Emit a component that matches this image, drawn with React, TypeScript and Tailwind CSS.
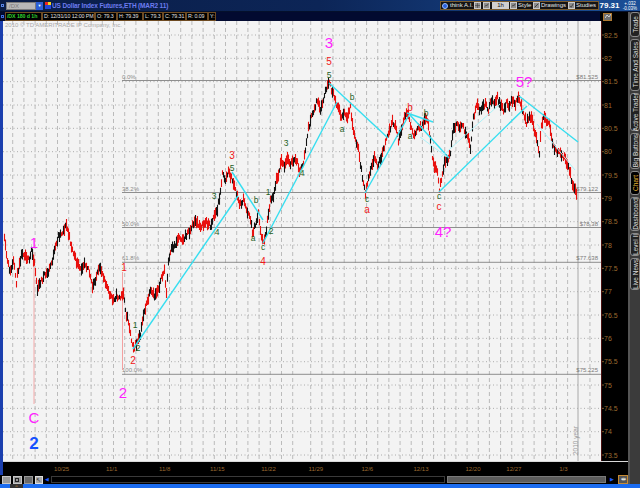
import React from "react";

const yOf = (p: number) => 35 + (82.5 - p) * 46.67;
const LEVELS = Array.from({ length: 19 }, (_, i) => 82.5 - i * 0.5);

// rough path of the hourly closes, in page pixels
const PATH: [number, number][] = [
  [4, 240], [7, 262], [10, 272], [13, 262], [16, 282], [19, 262], [22, 252], [26, 256], [29, 262], [31, 250],
  [34, 262], [37, 290], [40, 282], [44, 276], [48, 272], [52, 260], [55, 248], [58, 236], [62, 232], [66, 225],
  [69, 238], [72, 250], [76, 262], [80, 270], [84, 262], [88, 268], [92, 288], [96, 276], [100, 268], [104, 278],
  [108, 292], [112, 300], [116, 296], [120, 298], [123, 292], [125, 312], [128, 320], [131, 340], [134, 348],
  [137, 342], [140, 336], [143, 314], [146, 305], [150, 292], [154, 296], [158, 288], [162, 276], [164, 270],
  [166, 294], [168, 262], [171, 250], [175, 244], [179, 236], [183, 240], [187, 233], [190, 230], [194, 221],
  [198, 225], [202, 226], [206, 222], [210, 226], [213, 217], [217, 210], [220, 190], [222, 174], [225, 180],
  [228, 172], [231, 178], [234, 186], [237, 198], [240, 205], [243, 200], [246, 210], [249, 214], [252, 232],
  [255, 226], [258, 212], [261, 238], [263, 242], [266, 230], [268, 212], [270, 200], [273, 195], [276, 180],
  [279, 170], [281, 160], [284, 168], [287, 158], [290, 163], [293, 162], [296, 160], [299, 170], [302, 168],
  [305, 150], [308, 128], [311, 118], [314, 108], [317, 100], [320, 112], [323, 100], [326, 88], [329, 84],
  [332, 92], [335, 100], [338, 108], [341, 118], [344, 113], [347, 120], [350, 106], [352, 125], [355, 140],
  [358, 150], [361, 170], [363, 185], [365, 192], [368, 178], [371, 165], [374, 157], [377, 165], [380, 160],
  [383, 150], [386, 140], [389, 130], [392, 122], [395, 125], [398, 140], [401, 130], [404, 118], [407, 112],
  [410, 124], [413, 135], [416, 130], [419, 128], [422, 125], [425, 118], [428, 125], [431, 150], [434, 168],
  [437, 172], [439, 190], [441, 178], [444, 162], [447, 160], [450, 153], [453, 127], [456, 125], [459, 128],
  [462, 123], [465, 133], [468, 140], [470, 150], [473, 118], [476, 105], [479, 110], [482, 107], [485, 104],
  [488, 110], [491, 100], [494, 105], [497, 98], [500, 106], [503, 110], [506, 103], [509, 105], [512, 100],
  [515, 104], [518, 98], [520, 102], [523, 115], [526, 122], [529, 118], [532, 120], [535, 135], [537, 145],
  [539, 152], [541, 125], [543, 118], [546, 120], [549, 124], [552, 142], [555, 150], [558, 153], [561, 154],
  [564, 158], [567, 163], [570, 175], [572, 183], [574, 188], [576, 195],
];

function at(x: number) {
  for (let i = 1; i < PATH.length; i++) {
    const [x1, y1] = PATH[i];
    if (x <= x1) {
      const [x0, y0] = PATH[i - 1];
      return y0 + ((y1 - y0) * (x - x0)) / (x1 - x0);
    }
  }
  return PATH[PATH.length - 1][1];
}

let seed = 11;
const rnd = () => {
  seed = (seed * 16807) % 2147483647;
  return seed / 2147483647;
};

let redBars = "";
let blackBars = "";
for (let x = 4; x <= 576; x++) {
  const y = at(x) + (rnd() - 0.5) * 5;
  const h = 2 + rnd() * 4;
  const up = at(x + 2) - at(x - 2) < 0;
  const seg = `M${x + 0.5} ${(y - h).toFixed(1)}V${(y + h).toFixed(1)}`;
  if (up ? rnd() < 0.6 : rnd() < 0.15) blackBars += seg;
  else redBars += seg;
}

const dayLines: number[] = [];
for (let x = 12.7; x < 296; x += 11.2) dayLines.push(x);
for (let x = 310.7; x < 600; x += 11.17) if (Math.abs(x - 578) > 3) dayLines.push(x);

const FIBS = [
  { p: "0.0%", v: "$81.525", y: 80.5 },
  { p: "38.2%", v: "$79.122", y: 192.5 },
  { p: "50.0%", v: "$78.38", y: 227.5 },
  { p: "61.8%", v: "$77.638", y: 262.3 },
  { p: "100.0%", v: "$75.225", y: 374.3 },
];

const CYAN: [number, number, number, number, boolean?][] = [
  [133, 349, 238, 196],
  [232, 172, 263, 220],
  [263, 243, 337, 102],
  [329, 83, 388, 138],
  [365, 193, 409, 115],
  [407, 113, 433, 122],
  [410, 115, 449, 158],
  [439, 192, 527, 106],
  [519, 96, 578, 142],
  [441, 157, 500, 104, true],
  [537, 124, 575, 170, true],
  [420, 137, 447, 157, true],
];

type Lbl = [string, number, number];
const PINK: Lbl[] = [
  ["1", 34, 248], ["C", 34, 423], ["2", 123, 398], ["3", 329, 48], ["4?", 443, 237], ["5?", 524, 87],
];
const RED: Lbl[] = [
  ["1", 124, 271], ["2", 133, 364], ["3", 232, 159], ["4", 263, 265], ["5", 329, 65],
  ["a", 367, 213], ["b", 410, 111], ["c", 439, 210],
];
const GREEN: Lbl[] = [
  ["1", 135, 328], ["2", 138, 351], ["3", 214, 199], ["5", 232, 171], ["4", 217, 235], ["b", 256, 203],
  ["a", 253, 241], ["c", 263, 250], ["1", 268, 195], ["2", 271, 234], ["3", 286, 146], ["4", 302, 176],
  ["5", 329, 78], ["b", 352, 100], ["a", 342, 132], ["c", 367, 202], ["a", 410, 139], ["b", 426, 116],
  ["c", 439, 199],
];

const DATES: [string, number][] = [
  ["10/25", 34], ["11/1", 90], ["11/8", 147], ["11/15", 202], ["11/22", 257], ["11/29", 308],
  ["12/6", 365], ["12/13", 421], ["12/20", 477], ["12/27", 521], ["1/3", 578],
];

const TABS: [string, number, boolean?][] = [
  ["Trade", 25], ["Time And Sales", 52], ["Active Trader", 38], ["Big Buttons", 36],
  ["Chart", 24, true], ["Dashboard", 34], ["Level II", 23], ["Live News", 32],
];

const INFO: [string, number, boolean?][] = [
  ["/DX 180 d 1h", 37, true], ["D: 12/31/10 12:00 PM", 53], ["O: 79.3", 22], ["H: 79.39", 26],
  ["L: 79.3", 20], ["C: 79.31", 23], ["R: 0.09", 22], ["Y:", 8],
];

function MiniIcon({ kind }: { kind: "chart" | "pen" | "check" | "grid" }) {
  return (
    <svg width="7" height="7" viewBox="0 0 7 7" className="bg-[#8d8d8d] border border-[#c9c9c9]">
      {kind === "chart" && <path d="M1 5 L3 3 L4 4 L6 1" stroke="#222" strokeWidth="0.8" fill="none" />}
      {kind === "pen" && <path d="M1 6 L6 1" stroke="#222" strokeWidth="1" />}
      {kind === "check" && <path d="M1 4 L3 6 L6 1" stroke="#222" strokeWidth="0.9" fill="none" />}
      {kind === "grid" && <path d="M0 3.5 H7 M3.5 0 V7" stroke="#333" strokeWidth="0.7" />}
    </svg>
  );
}

function Chart() {
  return (
    <svg width="598" height="440" viewBox="3 21 598 440" className="block bg-[#f3f3f3]">
      {dayLines.map((x) => (
        <line key={x} x1={x} y1={21} x2={x} y2={461} stroke="#acacac" strokeWidth="0.8" strokeDasharray="4 3" />
      ))}
      {LEVELS.map((p) => (
        <line key={p} x1={3} y1={yOf(p)} x2={601} y2={yOf(p)} stroke="#9a9a9a" strokeWidth="0.8" strokeDasharray="1 2.5" />
      ))}
      <line x1={578} y1={21} x2={578} y2={461} stroke="#a8a8a8" strokeWidth="1" />
      <text x={5} y={27} fontSize="6" fill="#a8a8a8">2010 © TD AMERITRADE IP Company, Inc.</text>
      <text transform="translate(577.5 455) rotate(-90)" fontSize="6.5" fill="#9a9a9a">2010 year</text>
      {FIBS.map((f) => (
        <g key={f.p}>
          <line x1={122} y1={f.y} x2={601} y2={f.y} stroke="#8e8e8e" strokeWidth="1" />
          <text x={122} y={f.y - 2} fontSize="6" fill="#8a8a8a">{f.p}</text>
          <text x={598} y={f.y - 2} fontSize="6" fill="#7a7a7a" textAnchor="end">{f.v}</text>
        </g>
      ))}
      <line x1={34} y1={252} x2={34} y2={404} stroke="#f3a9a9" strokeWidth="1" />
      <line x1={122.5} y1={272} x2={122.5} y2={370} stroke="#f3a0a0" strokeWidth="1" />
      <path d={redBars} stroke="#e8100e" strokeWidth="1.1" fill="none" />
      <path d={blackBars} stroke="#141414" strokeWidth="1.1" fill="none" />
      {CYAN.map(([x1, y1, x2, y2, light], i) => (
        <line key={i} x1={x1} y1={y1} x2={x2} y2={y2} stroke={light ? "#aef1f8" : "#36def0"} strokeWidth={light ? 1 : 1.4} />
      ))}
      {PINK.map(([t, x, y], i) => (
        <text key={i} x={x} y={y} fontSize="15" fill="#ff1fff" textAnchor="middle">{t}</text>
      ))}
      <text x={34} y={449} fontSize="17" fontWeight="bold" fill="#1452ff" textAnchor="middle">2</text>
      {RED.map(([t, x, y], i) => (
        <text key={i} x={x} y={y} fontSize="10" fill="#f01818" textAnchor="middle">{t}</text>
      ))}
      {GREEN.map(([t, x, y], i) => (
        <text key={i} x={x} y={y} fontSize="8.5" fill="#235f23" textAnchor="middle">{t}</text>
      ))}
    </svg>
  );
}

export default function App() {
  return (
    <div className="w-[640px] h-[488px] bg-black flex flex-col overflow-hidden font-['Liberation_Sans',Arial,sans-serif]">
      {/* title bar */}
      <div className="h-[12px] flex items-center bg-gradient-to-r from-[#0a1d47] via-[#0c2557] to-[#1b4f98] border-b border-[#04102c]">
        <div className="w-[5px] flex justify-center">
          <div className="w-[3px] h-[3px] border border-[#5a86e6]" />
        </div>
        <div className="ml-[1px] w-[30px] h-[8px] bg-[#b8b8b8] border border-[#7c7c7c] text-[6px] leading-[6px] text-[#7a7a7a] pl-[2px]">
          /DX
        </div>
        <div className="w-[7px] h-[8px] bg-[#2c5fd6] flex items-center justify-center text-white text-[4px]">▼</div>
        <svg width="6" height="7" viewBox="0 0 6 7" className="ml-[2px]">
          <rect x="0" y="0" width="3" height="3" fill="#ee2222" />
          <rect x="3" y="0" width="3" height="3" fill="#f2d21a" />
          <rect x="0" y="3" width="6" height="4" fill="#2346d8" />
        </svg>
        <span className="ml-[1px] text-[6.5px] font-bold text-[#6d7cf0] tracking-[-0.15px] whitespace-nowrap">
          US Dollar Index Futures,ETH (MAR2 11)
        </span>
        <div className="ml-auto flex items-center h-[9px] border border-[#7a5a2a] bg-[#141414] text-[6px] text-[#e6e6e6] whitespace-nowrap">
          <div className="w-[32px] flex items-center gap-[2px] pl-[1px]">
            <span className="w-[6px] h-[6px] rounded-full bg-[#2a5fd8] border border-[#9cc0ff]" />
            <span>think A.I.</span>
          </div>
          <div className="w-[9px] flex justify-center"><MiniIcon kind="grid" /></div>
          <div className="w-[9px] flex justify-center"><MiniIcon kind="chart" /></div>
          <div className="w-[17px] h-[7px] mx-[1px] bg-[#cfcfcf] text-[#111] text-center leading-[7px]">1h</div>
          <div className="w-[23px] flex items-center gap-[1px]"><MiniIcon kind="chart" /><span>Style</span></div>
          <div className="w-[35px] flex items-center gap-[1px]"><MiniIcon kind="pen" /><span>Drawings</span></div>
          <div className="w-[30px] flex items-center gap-[1px]"><MiniIcon kind="check" /><span>Studies</span></div>
        </div>
        <span className="w-[21px] text-center text-[8px] font-bold text-white">79.31</span>
        <div className="w-[20px] flex flex-col items-center text-[4.5px] leading-[5px] text-white">
          <span>+.032</span>
          <span>-0.03%</span>
        </div>
      </div>

      <div className="flex h-[472px]">
        <div className="w-[628px] flex flex-col">
          {/* info row */}
          <div className="h-[9px] flex">
            <div className="w-[600px] flex bg-[#020a30]">
              <div className="w-[5px] flex items-center justify-center">
                <div className="w-[3px] h-[3px] border border-[#3f6fe0]" />
              </div>
              {INFO.map(([t, w, green]) => (
                <div
                  key={t}
                  style={{ width: w }}
                  className={`h-[9px] border border-[#6e4b22] bg-black pl-[1px] text-[5.3px] leading-[7px] tracking-[-0.1px] whitespace-nowrap ${green ? "text-[#2fd22f] font-bold" : "text-[#e0e0e0]"}`}
                >
                  {t}
                </div>
              ))}
            </div>
            <div className="w-[28px] flex items-center pl-[3px]">
              <div className="w-[9px] h-[8px] bg-[#6f6f6f] border border-[#b07a30] flex items-center justify-center">
                <svg width="6" height="5" viewBox="0 0 6 5">
                  <path d="M0 4 L2 1 L4 3 L6 0" stroke="#eee" strokeWidth="0.8" fill="none" />
                </svg>
              </div>
            </div>
          </div>

          {/* plot + axis */}
          <div className="flex h-[440px]">
            <div className="w-[3px] bg-[#1b3fae]" />
            <div className="border-r border-[#4a1010]">
              <Chart />
            </div>
            <svg width="26" height="440" viewBox="602 21 26 440" className="block">
              {LEVELS.map((p) => (
                <g key={p}>
                  <line x1={602} y1={yOf(p)} x2={604} y2={yOf(p)} stroke="#9c6a30" strokeWidth="0.8" />
                  <text x={604} y={yOf(p) + 2.5} fontSize="7" fill="#9c6a30">{String(p)}</text>
                </g>
              ))}
            </svg>
          </div>

          {/* date axis */}
          <div className="flex h-[14px]">
            <div className="w-[3px] bg-[#1b3fae]" />
            <svg width="625" height="14" viewBox="3 461 625 14" className="block border-t border-[#d8d8d8]">
              {DATES.map(([t, x]) => (
                <text key={t} x={x} y={470.5} fontSize="6.5" fill="#9c6a30">{t}</text>
              ))}
            </svg>
          </div>

          {/* bottom toolbar */}
          <div className="flex items-center h-[9px] gap-[2px] pl-[2px]">
            <div className="w-[9px] h-[8px] bg-[#9a9a9a] border border-[#c8c8c8]" />
            <div className="w-[9px] h-[8px] bg-[#9a9a9a] border border-[#c8c8c8] flex items-center justify-center">
              <div className="w-[4px] h-[4px] border border-[#222]" />
            </div>
            <div className="w-[9px] h-[8px] bg-[#6a6a6a] border border-[#999]" />
            <div className="w-[8px] h-[8px] bg-[#a8a8a8] border border-[#ddd] text-[6px] leading-[6px] text-[#222] text-center">↖</div>
            <span className="text-[#1f5cff] text-[5px] leading-[5px]">◀</span>
            <div className="w-[400px] h-[7px] border border-[#3a3a3a] bg-black" />
            <div className="w-[162px] h-[7px] bg-[#5c5c5c] border border-[#7a7a7a] bg-[radial-gradient(#777_0.5px,transparent_0.6px)] bg-[length:2px_2px]" />
            <span className="ml-[2px] text-[#1f5cff] text-[5px] leading-[5px]">▶</span>
            <div className="ml-[2px] w-[10px] h-[9px] border border-[#c68a32] bg-[#555] text-white text-[6px] leading-[7px] text-center">⇹</div>
          </div>
        </div>

        {/* side tabs */}
        <div className="w-[12px] bg-[#3b3b3b] border-l-2 border-[#555] flex flex-col gap-[2px]">
          {TABS.map(([t, h, active]) => (
            <div
              key={t}
              style={{ height: h }}
              className={`w-[10px] rounded-[3px] border border-[#8a8a8a] flex items-center justify-center ${active ? "bg-black text-[#e6b234]" : "bg-[#222] text-[#dcdcdc]"}`}
            >
              <span className="[writing-mode:vertical-rl] rotate-180 text-[6.5px] leading-[7px] whitespace-nowrap">{t}</span>
            </div>
          ))}
        </div>
      </div>

      {/* bottom border */}
      <div className="h-[4px] bg-[#1b6cf0] flex">
        <div className="ml-[10px] w-[13px] h-[4px] bg-[#333] flex items-center justify-center text-[#e0a030] text-[4px] leading-[4px]">⌂</div>
      </div>
    </div>
  );
}
